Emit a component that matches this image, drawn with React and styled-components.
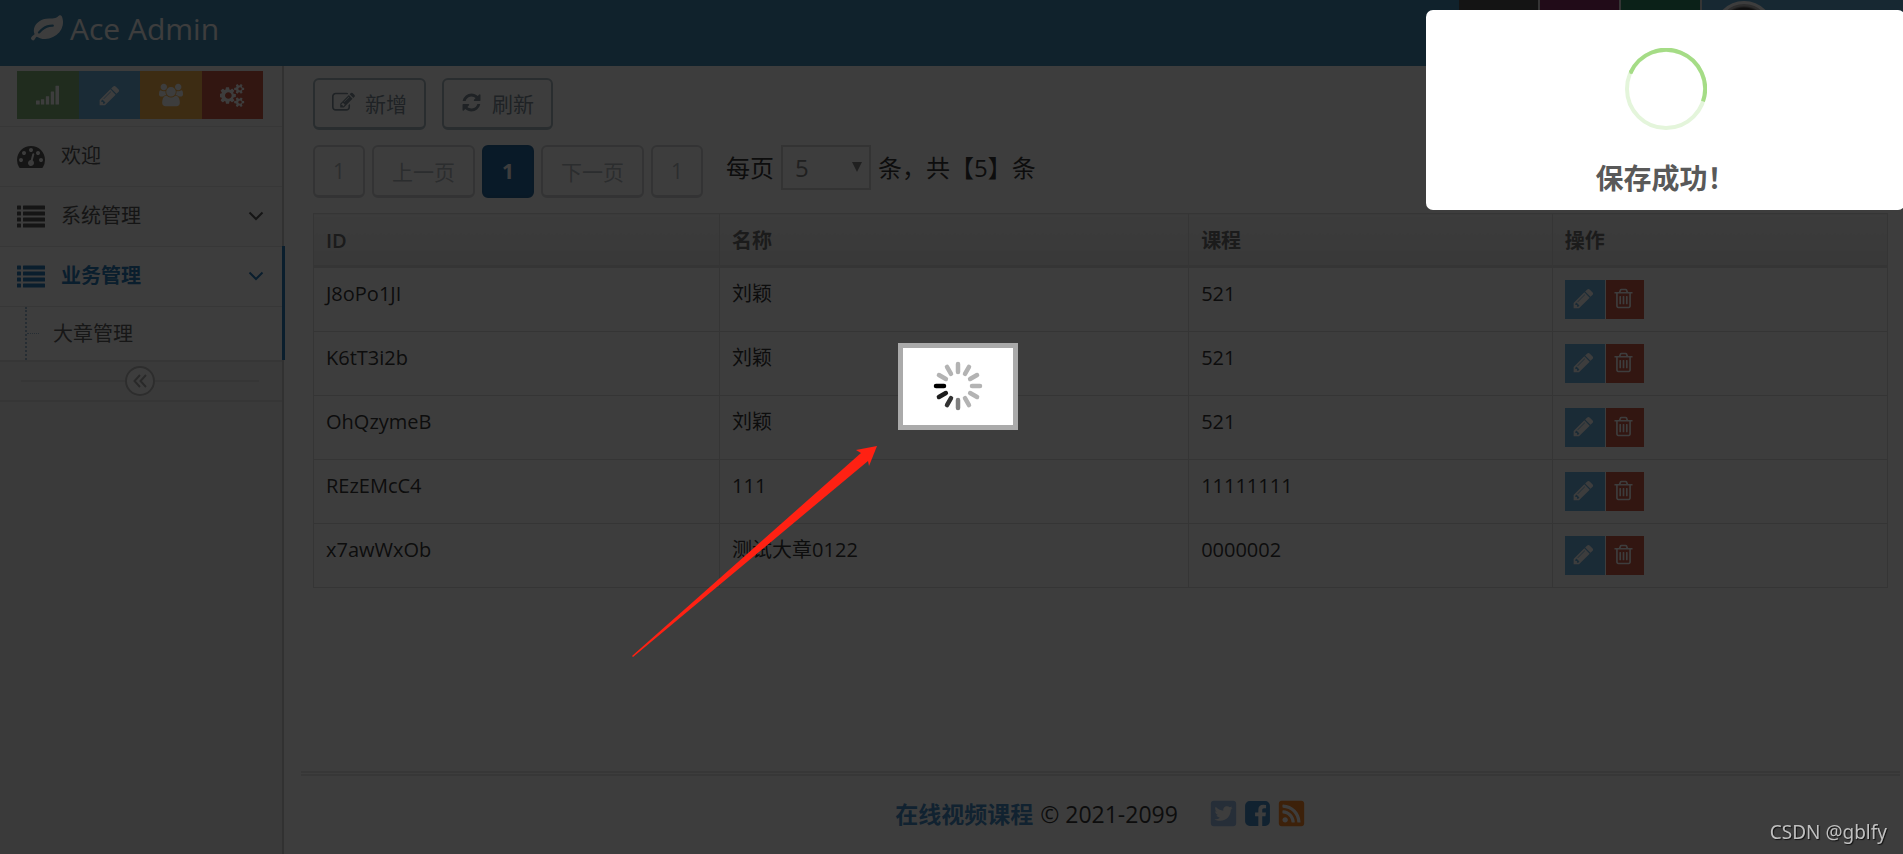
import React from "react";
import styled, { createGlobalStyle, css } from "styled-components";
import { FaTwitterSquare, FaRssSquare } from "react-icons/fa";

const GlobalStyle = createGlobalStyle`
  * {
    box-sizing: border-box;
  }

  body {
    margin: 0;
    background: #fff;
    color: #393939;
    font-family: "Open Sans", "Noto Sans CJK SC", sans-serif;
    font-size: 20px;
    line-height: 28px;
  }

  button,
  select {
    font-family: inherit;
  }

  a {
    color: inherit;
    text-decoration: none;
  }
`;

/* icons */

const PATHS = {
  leaf: "M1280 704q0-26-19-45t-45-19q-172 0-318 49.5t-259.5 134-235.5 219.5q-19 21-19 45 0 26 19 45t45 19q24 0 45-19 27-24 74-71t67-66q137-124 268.5-176t313.5-52q26 0 45-19t19-45zm512-198q0 95-20 193-46 224-184.5 383t-357.5 268q-214 108-438 108-148 0-286-47-15-5-88-42t-96-37q-16 0-39.5 32t-45 70-52.5 70-60 32q-43 0-63.5-17.5t-45.5-59.5q-2-4-6-11t-5.5-10-3-9.5-1.5-13.5q0-35 31-73.5t68-65.5 68-56 31-48q0-4-14-38t-16-44q-9-51-9-104 0-115 43.5-220t119-184.5 170.5-139 204-95.5q55-18 145-25.5t179.5-9 178.5-6 163.5-24 113.5-56.5l29.5-29.5 29.5-28 27-20 36.5-16 43.5-4.5q39 0 70.5 46t47.5 112 24 124 8 96z",
  pencil:
    "M491 1536l91-91-235-235-91 91v107h128v128h107zm523-928q0-22-22-22-10 0-17 7l-542 542q-7 7-7 17 0 22 22 22 10 0 17-7l542-542q7-7 7-17zm-54-192l416 416-832 832h-416v-416zm683 96q0 53-37 90l-166 166-416-416 166-165q36-38 90-38 53 0 91 38l235 234q37 39 37 91z",
  trash:
    "M704 736v576q0 14-9 23t-23 9h-64q-14 0-23-9t-9-23v-576q0-14 9-23t23-9h64q14 0 23 9t9 23zm256 0v576q0 14-9 23t-23 9h-64q-14 0-23-9t-9-23v-576q0-14 9-23t23-9h64q14 0 23 9t9 23zm256 0v576q0 14-9 23t-23 9h-64q-14 0-23-9t-9-23v-576q0-14 9-23t23-9h64q14 0 23 9t9 23zm128 724v-948h-896v948q0 22 7 40.5t14.5 27 10.5 8.5h832q3 0 10.5-8.5t14.5-27 7-40.5zm-672-1076h448l-48-117q-7-9-17-11h-317q-10 2-17 11zm928 32v64q0 14-9 23t-23 9h-96v948q0 83-47 143.5t-113 60.5h-832q-66 0-113-58.5t-47-141.5v-952h-96q-14 0-23-9t-9-23v-64q0-14 9-23t23-9h309l70-167q15-37 54-63t79-26h320q40 0 79 26t54 63l70 167h309q14 0 23 9t9 23z",
  refresh:
    "M1639 1056q0 5-1 7-64 268-268 434.5t-478 166.5q-146 0-282.5-55t-243.5-157l-129 129q-19 19-45 19t-45-19-19-45v-448q0-26 19-45t45-19h448q26 0 45 19t19 45-19 45l-137 137q71 66 161 102t187 36q134 0 250-65t186-179q11-17 53-117 8-23 30-23h192q13 0 22.5 9.5t9.5 22.5zm25-800v448q0 26-19 45t-45 19h-448q-26 0-45-19t-19-45 19-45l138-138q-148-137-349-137-134 0-250 65t-186 179q-11 17-53 117-8 23-30 23h-199q-13 0-22.5-9.5t-9.5-22.5v-7q65-268 270-434.5t480-166.5q146 0 284 55.5t245 156.5l130-129q19-19 45-19t45 19 19 45z",
  edit: "M888 1184l116-116-152-152-116 116v56h96v96h56zm440-720q-16-16-33 1l-350 350q-17 17-1 33t33-1l350-350q17-17 1-33zm80 594v190q0 119-84.5 203.5t-203.5 84.5h-832q-119 0-203.5-84.5t-84.5-203.5v-832q0-119 84.5-203.5t203.5-84.5h832q63 0 117 25 15 7 18 23 3 17-9 29l-49 49q-14 14-32 8-23-6-45-6h-832q-66 0-113 47t-47 113v832q0 66 47 113t113 47h832q66 0 113-47t47-113v-126q0-13 9-22l64-64q15-15 35-7t20 29zm-96-738l288 288-672 672h-288v-288zm444 132l-92 92-288-288 92-92q28-28 68-28t68 28l152 152q28 28 28 68t-28 68z",
  dashboard:
    "M384 1152q0-53-37.5-90.5t-90.5-37.5-90.5 37.5-37.5 90.5 37.5 90.5 90.5 37.5 90.5-37.5 37.5-90.5zm192-448q0-53-37.5-90.5t-90.5-37.5-90.5 37.5-37.5 90.5 37.5 90.5 90.5 37.5 90.5-37.5 37.5-90.5zm428 481l101-382q6-26-7.5-48.5t-38.5-29.5-48 6.5-30 39.5l-101 382q-60 5-107 43.5t-63 98.5q-20 77 20 146t117 89 146-20 89-117q16-60-6-117t-72-91zm660-33q0-53-37.5-90.5t-90.5-37.5-90.5 37.5-37.5 90.5 37.5 90.5 90.5 37.5 90.5-37.5 37.5-90.5zm-640-640q0-53-37.5-90.5t-90.5-37.5-90.5 37.5-37.5 90.5 37.5 90.5 90.5 37.5 90.5-37.5 37.5-90.5zm448 192q0-53-37.5-90.5t-90.5-37.5-90.5 37.5-37.5 90.5 37.5 90.5 90.5 37.5 90.5-37.5 37.5-90.5zm320 448q0 261-141 483-19 29-54 29h-1402q-35 0-54-29-141-221-141-483 0-182 71-348t191-286 286-191 348-71 348 71 286 191 191 286 71 348z",
  list: "M32 256h192q32 0 32 32v192q0 32-32 32h-192q-32 0-32-32v-192q0-32 32-32zM32 640h192q32 0 32 32v192q0 32-32 32h-192q-32 0-32-32v-192q0-32 32-32zM32 1024h192q32 0 32 32v192q0 32-32 32h-192q-32 0-32-32v-192q0-32 32-32zM32 1408h192q32 0 32 32v192q0 32-32 32h-192q-32 0-32-32v-192q0-32 32-32zM416 256h1344q32 0 32 32v192q0 32-32 32h-1344q-32 0-32-32v-192q0-32 32-32zM416 640h1344q32 0 32 32v192q0 32-32 32h-1344q-32 0-32-32v-192q0-32 32-32zM416 1024h1344q32 0 32 32v192q0 32-32 32h-1344q-32 0-32-32v-192q0-32 32-32zM416 1408h1344q32 0 32 32v192q0 32-32 32h-1344q-32 0-32-32v-192q0-32 32-32z",
  signal:
    "M32 1280h224q32 0 32 32v256q0 32-32 32h-224q-32 0-32-32v-256q0-32 32-32zM416 1184h192q32 0 32 32v352q0 32-32 32h-192q-32 0-32-32v-352q0-32 32-32zM800 950h192q32 0 32 32v586q0 32-32 32h-192q-32 0-32-32v-586q0-32 32-32zM1184 590h192q32 0 32 32v946q0 32-32 32h-192q-32 0-32-32v-946q0-32 32-32zM1552 130h208q32 0 32 32v1406q0 32-32 32h-208q-32 0-32-32v-1406q0-32 32-32z",
  group:
    "M593 896q-162 5-265 128h-134q-82 0-138-40.5t-56-118.5q0-353 124-353 6 0 43.5 21t97.5 42.5 119 21.5q67 0 133-23-5 37-5 66 0 139 81 256zm1071 637q0 120-73 189.5t-194 69.5h-874q-121 0-194-69.5t-73-189.5q0-53 3.5-103.5t14-109 26.5-108.5 43-97.5 62-81 85.5-53.5 111.5-20q10 0 43 21.5t73 48 107 48 135 21.5 135-21.5 107-48 73-48 43-21.5q61 0 111.5 20t85.5 53.5 62 81 43 97.5 26.5 108.5 14 109 3.5 103.5zm-1024-1277q0 106-75 181t-181 75-181-75-75-181 75-181 181-75 181 75 75 181zm704 384q0 159-112.5 271.5t-271.5 112.5-271.5-112.5-112.5-271.5 112.5-271.5 271.5-112.5 271.5 112.5 112.5 271.5zm576 225q0 78-56 118.5t-138 40.5h-134q-103-123-265-128 81-117 81-256 0-29-5-66 66 23 133 23 59 0 119-21.5t97.5-42.5 43.5-21q124 0 124 353zm-128-609q0 106-75 181t-181 75-181-75-75-181 75-181 181-75 181 75 75 181z",
  cogs: "M832 896q0-106-75-181t-181-75-181 75-75 181 75 181 181 75 181-75 75-181zm768 512q0-52-38-90t-90-38-90 38-38 90q0 53 37.5 90.5t90.5 37.5 90.5-37.5 37.5-90.5zm0-1024q0-52-38-90t-90-38-90 38-38 90q0 53 37.5 90.5t90.5 37.5 90.5-37.5 37.5-90.5zm-448 421v185q0 10-7 19.5t-16 10.5l-155 24q-11 35-32 76 34 48 90 115 7 11 7 20 0 12-7 19-23 30-82.5 89.5t-78.5 59.5q-11 0-21-7l-115-90q-37 19-77 31-11 108-23 155-7 24-30 24h-186q-11 0-20-7.5t-10-17.5l-23-153q-34-10-75-31l-118 89q-7 7-20 7-11 0-21-8-144-133-144-160 0-9 7-19 10-14 41-53t47-61q-23-44-35-82l-152-24q-10-1-17-9.5t-7-19.5v-185q0-10 7-19.5t16-10.5l155-24q11-35 32-76-34-48-90-115-7-11-7-20 0-12 7-20 22-30 82-89t79-59q11 0 21 7l115 90q34-18 77-32 11-108 23-154 7-24 30-24h186q11 0 20 7.5t10 17.5l23 153q34 10 75 31l118-89q8-7 20-7 11 0 21 8 144 133 144 160 0 8-7 19-12 16-42 54t-45 60q23 48 34 82l152 23q10 2 17 10.5t7 19.5zm640 533v140q0 16-149 31-12 27-30 52 51 113 51 138 0 4-4 7-122 71-124 71-8 0-46-47t-52-68q-20 2-30 2t-30-2q-14 21-52 68t-46 47q-2 0-124-71-4-3-4-7 0-25 51-138-18-25-30-52-149-15-149-31v-140q0-16 149-31 13-29 30-52-51-113-51-138 0-4 4-7 4-2 35-20t59-34 30-16q8 0 46 46.5t52 67.5q20-2 30-2t30 2q51-71 92-112l6-2q4 0 124 70 4 3 4 7 0 25-51 138 17 23 30 52 149 15 149 31zm0-1024v140q0 16-149 31-12 27-30 52 51 113 51 138 0 4-4 7-122 71-124 71-8 0-46-47t-52-68q-20 2-30 2t-30-2q-14 21-52 68t-46 47q-2 0-124-71-4-3-4-7 0-25 51-138-18-25-30-52-149-15-149-31v-140q0-16 149-31 13-29 30-52-51-113-51-138 0-4 4-7 4-2 35-20t59-34 30-16q8 0 46 46.5t52 67.5q20-2 30-2t30 2q51-71 92-112l6-2q4 0 124 70 4 3 4 7 0 25-51 138 17 23 30 52 149 15 149 31z",
  facebook:
    "M1376 128q119 0 203.5 84.5t84.5 203.5v960q0 119-84.5 203.5t-203.5 84.5h-188v-595h199l30-232h-229v-148q0-56 23.5-84t91.5-28l122-1v-207q-63-9-178-9-136 0-217.5 80t-81.5 226v171h-200v232h200v595h-532q-119 0-203.5-84.5t-84.5-203.5v-960q0-119 84.5-203.5t203.5-84.5h960z",
};

const Svg = styled.svg`
  display: block;
  flex: none;
  fill: currentColor;
`;

const Icon = ({ name, size, box = "0 0 1792 1792" }) => (
  <Svg width={size} height={size} viewBox={box} aria-hidden="true">
    <path d={PATHS[name]} />
  </Svg>
);

const Chevron = () => (
  <Svg width="16" height="10" viewBox="0 0 16 10" aria-hidden="true">
    <path
      d="M1.5 1.5 8 8l6.500-6.500"
      fill="none"
      stroke="currentColor"
      strokeWidth="2"
    />
  </Svg>
);

/* navbar */

const Navbar = styled.header`
  display: flex;
  justify-content: space-between;
  height: 66px;
  background: #438eb9;
  color: #fff;
`;

const Brand = styled.a`
  display: flex;
  align-items: center;
  gap: 7px;
  padding: 0 31px 8px;
  font-size: 30px;
`;

const NavList = styled.div`
  display: flex;
  gap: 2px;
  background: #ddd;
`;

const NavItem = styled.div`
  width: ${(props) => (props.$wide ? "201px" : "79px")};
  padding: 1px 12px;
  background: ${(props) => props.$color};
`;

const Avatar = styled.div`
  width: 60px;
  height: 60px;
  border: 3px solid #fff;
  border-radius: 50%;
  background: radial-gradient(#444 60%, #bbb 66%);
`;

/* sidebar */

const Page = styled.div`
  display: flex;
  flex-direction: column;
  min-height: 100vh;
`;

const Body = styled.div`
  display: flex;
  flex: 1;
`;

const Sidebar = styled.nav`
  flex: none;
  width: 284px;
  border-right: 2px solid #ccc;
  background: #f2f2f2;
`;

const Shortcuts = styled.div`
  display: flex;
  height: 60px;
  padding: 5px 19px 7px 17px;
  background: #fafafa;
`;

const Shortcut = styled.button`
  display: flex;
  flex: 1;
  align-items: center;
  justify-content: center;
  padding: 0;
  border: 0;
  background: ${(props) => props.$color};
  color: #fff;
`;

const Menu = styled.ul`
  margin: 0;
  padding: 0;
  list-style: none;
`;

const MenuItem = styled.li`
  position: relative;
  border-top: 1px solid #e5e5e5;
  background: ${(props) => (props.$active ? "#fff" : "#f8f8f8")};

  ${(props) =>
    props.$active &&
    css`
      &::after {
        content: "";
        position: absolute;
        top: -1px;
        right: -3px;
        bottom: 0;
        width: 3px;
        background: #2b7dbc;
      }
    `}
`;

const MenuLink = styled.a`
  display: flex;
  align-items: center;
  gap: 16px;
  height: 59px;
  padding: 0 18px 1px 17px;
  color: ${(props) => (props.$active ? "#2b7dbc" : "#585858")};
  font-weight: ${(props) => (props.$active ? 700 : 400)};
`;

const MenuText = styled.span`
  flex: 1;
  padding-bottom: 1px;
`;

const SubMenu = styled.ul`
  margin: 0;
  padding: 0 0 0 25px;
  border-top: 1px solid #e5e5e5;
  list-style: none;
`;

const SubItem = styled.li`
  display: flex;
  align-items: center;
  gap: 14px;
  height: 53px;
  border-left: 2px dotted #9dbdd6;
  color: #616161;

  &::before {
    content: "";
    width: 12px;
    border-top: 1px dotted #9dbdd6;
  }
`;

const Toggle = styled.div`
  display: flex;
  align-items: center;
  height: 42px;
  padding: 0 23px 0 21px;
  border: 2px solid #e0e0e0;
  border-width: 2px 0;
  background: #f3f3f3;

  &::before,
  &::after {
    content: "";
    flex: 1;
    border-top: 2px solid #e0e0e0;
  }
`;

const ToggleButton = styled.button`
  display: flex;
  align-items: center;
  justify-content: center;
  width: 30px;
  height: 30px;
  padding: 0;
  border: 2px solid #bbb;
  border-radius: 50%;
  background: #fff;
  color: #aaa;
`;

/* content */

const Main = styled.main`
  display: flex;
  flex: 1;
  flex-direction: column;
  min-width: 0;
`;

const Content = styled.section`
  padding: 12px 15px 0 29px;
`;

const Toolbar = styled.div`
  display: flex;
  gap: 16px;
`;

const OutlineButton = styled.button`
  display: flex;
  align-items: center;
  gap: 10px;
  height: 52px;
  padding: 0 17px 2px;
  border: 2px solid #abbac3;
  border-bottom-width: 3px;
  border-radius: 6px;
  background: #fff;
  color: #80909a;
  font-size: 21px;
`;

const Pagination = styled.div`
  display: flex;
  align-items: flex-start;
  gap: 7px;
  margin-top: 15px;
`;

const PageButton = styled.button`
  height: 53px;
  padding: 0 18px;
  border: 2px solid ${(props) => (props.$current ? "#27689d" : "#d3d5d7")};
  border-bottom-width: 3px;
  border-radius: 6px;
  background: ${(props) => (props.$current ? "#286fa8" : "#fff")};
  color: ${(props) => (props.$current ? "#fff" : "#b5babf")};
  font-size: 21px;
  font-weight: ${(props) => (props.$current ? 700 : 400)};
`;

const PageSize = styled.label`
  display: flex;
  align-items: center;
  gap: 7px;
  margin-left: 16px;
  font-size: 24px;
  line-height: 42px;
`;

const SelectBox = styled.span`
  position: relative;
`;

const Select = styled.select`
  display: block;
  width: 90px;
  height: 45px;
  padding: 0 12px;
  border: 2px solid #d5d5d5;
  border-radius: 0;
  appearance: none;
  background: #fff;
  color: #858585;
  font-size: 24px;
`;

const SelectArrow = styled.svg`
  position: absolute;
  top: 17px;
  right: 9px;
  fill: #858585;
  pointer-events: none;
`;

const Table = styled.table`
  width: 100%;
  margin-top: 15px;
  border-collapse: collapse;
  table-layout: fixed;
`;

const Th = styled.th`
  width: ${(props) => props.$width};
  height: 53px;
  padding: 2px 12px 0;
  border: 1px solid #ddd;
  border-bottom: 3px solid #ddd;
  background: linear-gradient(to bottom, #f8f8f8, #ececec);
  color: #707070;
  font-weight: 600;
  text-align: left;
`;

const Td = styled.td`
  height: 64px;
  padding: 12px;
  border: 1px solid #ddd;
  vertical-align: top;
`;

const Actions = styled.div`
  display: flex;
  gap: 1px;
`;

const ActionButton = styled.button`
  display: flex;
  align-items: center;
  justify-content: center;
  width: ${(props) => (props.$danger ? "38px" : "40px")};
  height: 39px;
  padding: 0 3px 3px 0;
  border: 0;
  background: ${(props) => (props.$danger ? "#d15b47" : "#6fb3e0")};
  color: #fff;
`;

const Footer = styled.footer`
  display: flex;
  align-items: center;
  justify-content: center;
  gap: 7px;
  height: 83px;
  margin: auto 3px 0 17px;
  border-top: 2px solid #e5e5e5;
  box-shadow: inset 0 1px #fff, inset 0 3px #e5e5e5;
  font-size: 23px;
`;

const FooterLink = styled.a`
  color: #478fca;
  font-weight: 700;
`;

const Socials = styled.div`
  display: flex;
  gap: 5px;
  margin-left: 24px;
`;

const Social = styled.a`
  display: flex;
  color: ${(props) => props.$color};
`;

/* overlays */

const Backdrop = styled.div`
  position: fixed;
  inset: 0;
  background: rgba(0, 0, 0, 0.76);
`;

const Loading = styled.div`
  position: fixed;
  top: 40%;
  left: 50%;
  display: flex;
  align-items: center;
  justify-content: center;
  width: 120px;
  height: 87px;
  margin: 1px 0 0 -54px;
  border: 5px solid #aaa;
  background: #fff;
`;

const Toast = styled.div`
  position: fixed;
  top: 10px;
  right: -2px;
  display: flex;
  flex-direction: column;
  align-items: center;
  gap: 28px;
  width: 479px;
  height: 200px;
  padding-top: 38px;
  border-radius: 7px;
  background: #fff;
`;

const ToastTitle = styled.h2`
  margin: 0;
  color: #595959;
  font-size: 28px;
  font-weight: 700;
  line-height: 40px;
`;

const Pointer = styled.svg`
  position: fixed;
  top: 446px;
  left: calc(50% - 320px);
  fill: #ff2113;
`;

const Watermark = styled.div`
  position: fixed;
  right: 16px;
  bottom: 8px;
  color: #c0c0c0;
  font-family: "Noto Sans", sans-serif;
  font-size: 19px;
  text-shadow: 1px 1px 1px #111;
`;

const SPOKES = [
  "#b3b3b3",
  "#b3b3b3",
  "#b3b3b3",
  "#b3b3b3",
  "#b3b3b3",
  "#b3b3b3",
  "#808080",
  "#333",
  "#1c1c1c",
  "#000",
  "#b3b3b3",
  "#b3b3b3",
];

const ROWS = [
  { id: "J8oPo1JI", name: "刘颖", course: "521" },
  { id: "K6tT3i2b", name: "刘颖", course: "521" },
  { id: "OhQzymeB", name: "刘颖", course: "521" },
  { id: "REzEMcC4", name: "111", course: "11111111" },
  { id: "x7awWxOb", name: "测试大章0122", course: "0000002" },
];

const AppSidebar = () => {
  return (
    <Sidebar>
      <Shortcuts>
        <Shortcut $color="#87b87f" aria-label="signal">
          <Icon name="signal" size={23} />
        </Shortcut>
        <Shortcut $color="#6fb3e0" aria-label="pencil">
          <Icon name="pencil" size={23} />
        </Shortcut>
        <Shortcut $color="#ffb752" aria-label="group">
          <Icon name="group" size={24} box="0 0 1920 1792" />
        </Shortcut>
        <Shortcut $color="#d15b47" aria-label="cogs">
          <Icon name="cogs" size={25} box="-64 0 1920 1792" />
        </Shortcut>
      </Shortcuts>
      <Menu>
        <MenuItem>
          <MenuLink href="#welcome">
            <Icon name="dashboard" size={28} />
            <MenuText>欢迎</MenuText>
          </MenuLink>
        </MenuItem>
        <MenuItem>
          <MenuLink href="#system">
            <Icon name="list" size={28} box="0 32 1792 1792" />
            <MenuText>系统管理</MenuText>
            <Chevron />
          </MenuLink>
        </MenuItem>
        <MenuItem $active>
          <MenuLink href="#business" $active>
            <Icon name="list" size={28} box="0 32 1792 1792" />
            <MenuText>业务管理</MenuText>
            <Chevron />
          </MenuLink>
          <SubMenu>
            <SubItem>
              <a href="#chapter">大章管理</a>
            </SubItem>
          </SubMenu>
        </MenuItem>
      </Menu>
      <Toggle>
        <ToggleButton aria-label="collapse">
          <Svg width="14" height="14" viewBox="0 0 14 14">
            <path
              d="M7 1 1.500 7 7 13M13 1 7.500 7 13 13"
              fill="none"
              stroke="currentColor"
              strokeWidth="2"
            />
          </Svg>
        </ToggleButton>
      </Toggle>
    </Sidebar>
  );
};

const ChapterTable = () => {
  return (
    <Table>
      <thead>
        <tr>
          <Th $width="25.8%">ID</Th>
          <Th $width="29.8%">名称</Th>
          <Th $width="23.1%">课程</Th>
          <Th>操作</Th>
        </tr>
      </thead>
      <tbody>
        {ROWS.map((row) => (
          <tr key={row.id}>
            <Td>{row.id}</Td>
            <Td>{row.name}</Td>
            <Td>{row.course}</Td>
            <Td>
              <Actions>
                <ActionButton aria-label="edit">
                  <Icon name="pencil" size={23} />
                </ActionButton>
                <ActionButton $danger aria-label="delete">
                  <Icon name="trash" size={23} />
                </ActionButton>
              </Actions>
            </Td>
          </tr>
        ))}
      </tbody>
    </Table>
  );
};

const App = () => {
  return (
    <>
      <GlobalStyle />
      <Page>
        <Navbar>
          <Brand href="#home">
            <Icon name="leaf" size={32} />
            Ace Admin
          </Brand>
          <NavList>
            <NavItem $color="#555" />
            <NavItem $color="#892e65" />
            <NavItem $color="#2e8965" />
            <NavItem $color="#62a8d1" $wide>
              <Avatar />
            </NavItem>
          </NavList>
        </Navbar>
        <Body>
          <AppSidebar />
          <Main>
            <Content>
              <Toolbar>
                <OutlineButton>
                  <Icon name="edit" size={23} />
                  新增
                </OutlineButton>
                <OutlineButton>
                  <Icon name="refresh" size={21} />
                  刷新
                </OutlineButton>
              </Toolbar>
              <Pagination>
                <PageButton disabled>1</PageButton>
                <PageButton disabled>上一页</PageButton>
                <PageButton $current>1</PageButton>
                <PageButton disabled>下一页</PageButton>
                <PageButton disabled>1</PageButton>
                <PageSize>
                  每页
                  <SelectBox>
                    <Select defaultValue="5">
                      <option value="5">5</option>
                      <option value="10">10</option>
                    </Select>
                    <SelectArrow width="10" height="10" viewBox="0 0 10 10">
                      <path d="M0 0h10L5 10z" />
                    </SelectArrow>
                  </SelectBox>
                  条，共【5】条
                </PageSize>
              </Pagination>
              <ChapterTable />
            </Content>
            <Footer>
              <FooterLink href="#site">在线视频课程</FooterLink>
              <span>© 2021-2099</span>
              <Socials>
                <Social href="#twitter" aria-label="twitter" $color="#a0c0e8">
                  <FaTwitterSquare size={29} />
                </Social>
                <Social href="#facebook" aria-label="facebook" $color="#478fca">
                  <Icon name="facebook" size={29} />
                </Social>
                <Social href="#rss" aria-label="rss" $color="#ff892a">
                  <FaRssSquare size={29} />
                </Social>
              </Socials>
            </Footer>
          </Main>
        </Body>
      </Page>

      <Backdrop />
      <Loading role="status">
        <svg width="50" height="50" viewBox="-25 -25 50 50">
          {SPOKES.map((color, i) => (
            <path
              key={i}
              d="M0-14V-22"
              stroke={color}
              strokeWidth="4.500"
              strokeLinecap="round"
              transform={`rotate(${i * 30})`}
            />
          ))}
        </svg>
      </Loading>
      <Toast role="alert">
        <svg width="82" height="82" viewBox="-41 -41 82 82" fill="none">
          <circle r="39" stroke="#e4f5db" strokeWidth="4" />
          <path
            d="M-35.300-16.600A39 39 0 0 1 37 12.400"
            stroke="#a5dc86"
            strokeWidth="4"
          />
          <circle cx="-34.800" cy="-17" r="2" fill="#a5dc86" />
        </svg>
        <ToastTitle>保存成功！</ToastTitle>
      </Toast>
      <Pointer width="246" height="212" viewBox="0 0 246 212">
        <path d="M0 210 229 7 224 4 245 0 237 20 236 15 1 211z" />
      </Pointer>
      <Watermark>CSDN @gblfy</Watermark>
    </>
  );
};

export default App;
